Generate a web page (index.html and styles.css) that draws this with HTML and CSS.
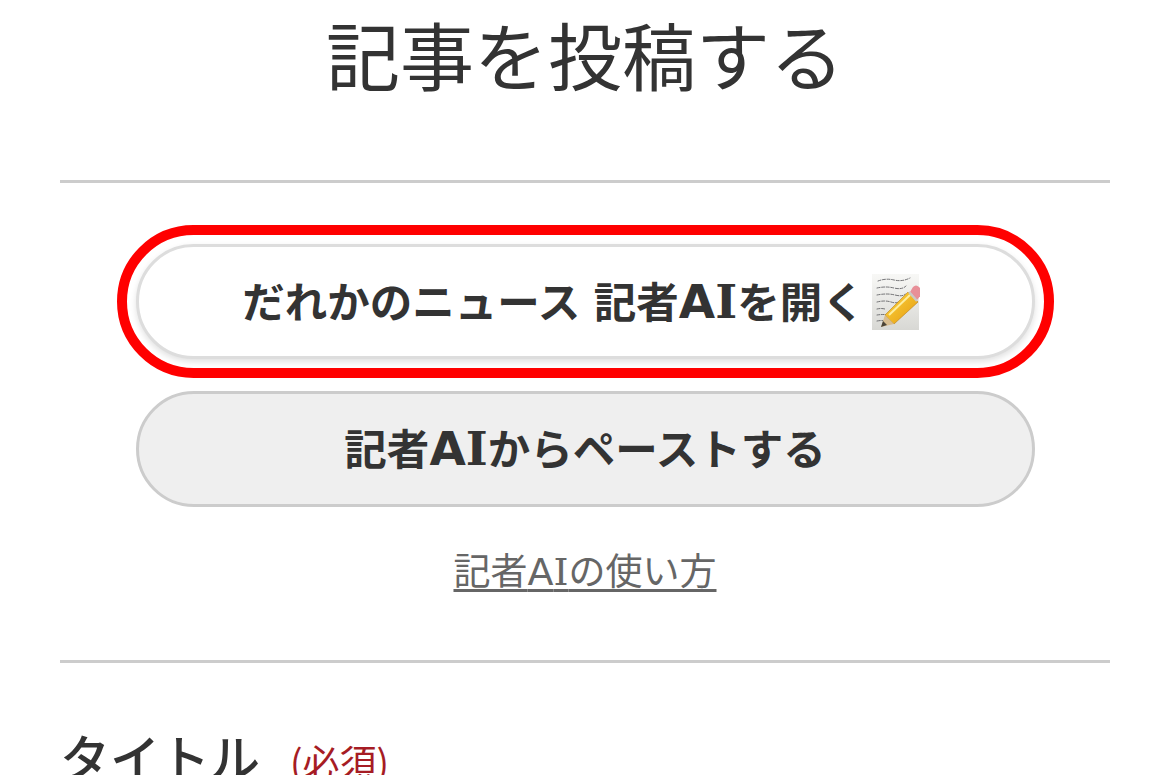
FILE: index.html
```html
<!DOCTYPE html>
<html lang="ja">
<head>
    <meta charset="UTF-8">
    <title>記事を投稿する</title>
    <link rel="stylesheet" href="styles.css">
</head>
<body>
    <h1 class="page-title">記事を投稿する</h1>

    <section class="ai-section">
        <a class="btn btn-open" href="#">
            <span>だれかのニュース 記者<span class="latin">A<span class="latin-i">I</span></span>を開く</span>
            <svg class="memo-icon" viewBox="0 0 48 56" width="48" height="56" aria-hidden="true">
                <defs>
                    <linearGradient id="paper" x1="0" y1="0" x2="0" y2="1">
                        <stop offset="0" stop-color="#f8f8f6"/>
                        <stop offset="1" stop-color="#d8d8d4"/>
                    </linearGradient>
                    <linearGradient id="pencil" x1="0" y1="0" x2="1" y2="1">
                        <stop offset="0" stop-color="#fcd63f"/>
                        <stop offset="1" stop-color="#e59a10"/>
                    </linearGradient>
                </defs>
                <rect x="0" y="0" width="47" height="56" fill="url(#paper)"/>
                <g fill="none" stroke="#66666a" stroke-width="0.9" stroke-linecap="round" stroke-dasharray="3 1.6">
                    <path d="M6 7 q8 -3 16 -1 t16 -2"/>
                    <path d="M5 14 q9 -2 17 0 t12 -2"/>
                    <path d="M5 21 q10 -2 18 0 t10 -1"/>
                    <path d="M5 28 q8 -2 14 0 t9 -1"/>
                    <path d="M5 35 q4 -1 8 0"/>
                    <path d="M5 41 q6 -1 14 0"/>
                    <path d="M5 47 q5 -1 9 0"/>
                </g>
                <path d="M13 41 L36 18 L46 28 L22 50 Z" fill="url(#pencil)" stroke="#b9801a" stroke-width="0.6"/>
                <path d="M13 41 L22 50 L9 53 Z" fill="#d8bd90"/>
                <path d="M9 53 L11 47 L15 51 Z" fill="#4a4438"/>
                <path d="M17 41 L38 21" stroke="#fdeea0" stroke-width="2"/>
                <path d="M38 18 L41 13 Q44 10 47 13 Q51 17 49 21 L45 26 Z" fill="#e88f98"/>
                <path d="M37 18 L45 27" stroke="#c9c9c4" stroke-width="2.5"/>
            </svg>
        </a>
        <a class="btn btn-paste" href="#"><span>記者<span class="latin">A<span class="latin-i">I</span></span>からペーストする</span></a>
        <a class="howto" href="#">記者<span class="latin-thin">A<span class="latin-i">I</span></span>の使い方</a>
    </section>

    <h2 class="field-label">タイトル<span class="required">(必須)</span></h2>
</body>
</html>
```

FILE: styles.css
```css
* {
    box-sizing: border-box;
    margin: 0;
    padding: 0;
}
html, body {
    height: 775px;
    overflow: hidden;
    background-color: #fff;
}
body {
    font-family: "Noto Sans CJK JP", "Noto Sans", sans-serif;
    color: #333;
    padding: 0 60px;
}
.page-title {
    height: 180px;
    font-size: 74px;
    line-height: 106px;
    font-weight: 400;
    text-align: center;
}
.ai-section {
    display: flex;
    flex-direction: column;
    align-items: center;
    height: 483px;
    padding-top: 61px;
    border-top: 3px solid #ccc;
    border-bottom: 3px solid #ccc;
}
.btn {
    position: relative;
    display: flex;
    align-items: center;
    justify-content: center;
    gap: 7px;
    width: 899px;
    border-radius: 58px;
    font-size: 42.5px;
    font-weight: 700;
    line-height: 60px;
    word-spacing: 4px;
    color: #333;
    text-decoration: none;
}
.btn > span {
    padding-bottom: 4px;
}
.btn-open {
    height: 115px;
    padding-right: 8px;
    background-color: #fff;
    border: 3px solid #ddd;
    box-shadow: 0 3px 6px rgba(0, 0, 0, 0.12);
}
/* red ring drawn over the first button */
.btn-open::after {
    content: "";
    position: absolute;
    inset: -22px;
    border: 10px solid #f00;
    border-radius: 78px;
}
.btn-paste {
    height: 116px;
    margin-top: 32px;
    background-color: #efefef;
    border: 3px solid #ccc;
}
.latin {
    font-family: "DejaVu Sans", sans-serif;
    font-size: 47px;
    line-height: 40px;
    font-weight: 700;
}
.latin-thin {
    font-family: "DejaVu Sans", sans-serif;
    font-size: 38px;
    line-height: 40px;
}
/* the capital I here has slab ends, the sans face has none */
.latin-i {
    font-family: "DejaVu Serif", serif;
}
.memo-icon {
    flex: none;
}
.howto {
    margin-top: 35px;
    font-size: 37px;
    line-height: 54px;
    color: #666;
    text-decoration: underline;
    text-decoration-thickness: 3px;
    text-underline-offset: 4px;
}
.field-label {
    padding-top: 54px;
    font-size: 50px;
    line-height: 76px;
    font-weight: 500;
    white-space: nowrap;
}
.required {
    margin-left: 30px;
    font-size: 37px;
    font-weight: 400;
    color: #a61c24;
}
```
